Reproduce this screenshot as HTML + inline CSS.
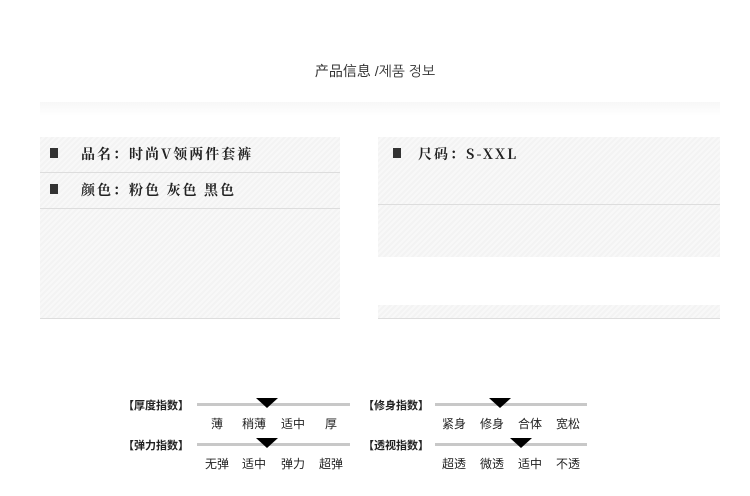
<!DOCTYPE html>
<html><head><meta charset="utf-8"><style>
body{margin:0;width:750px;height:496px;background:#fff;position:relative;overflow:hidden;font-family:"Liberation Sans","Noto Sans CJK SC",sans-serif;}
.a{position:absolute}
.title{left:0;width:750px;top:61px;text-align:center;font-size:14px;color:#333;}
.shadow{left:40px;width:680px;top:102px;height:14px;background:linear-gradient(#f7f7f7,#fff);}
.pan{background:repeating-linear-gradient(135deg,#f3f3f3 0 2px,#f8f8f8 2px 4px);}
.ln{height:1px;background:#ddd}
.row{font-family:"Noto Serif CJK SC",serif;font-size:14px;color:#222;font-weight:bold;letter-spacing:2px}
.sq{width:8px;height:10px;background:#333}
.lab{font-size:11px;color:#222;font-weight:bold}
.bar{height:3px;background:#c8c8c8}
.tri{width:0;height:0;border-left:11px solid transparent;border-right:11px solid transparent;border-top:10px solid #000}
.t{font-size:12px;color:#222;transform:translateX(-50%)}
</style></head><body>
<div class="a title">产品信息 /<span style="font-family:'NanumGothic','Noto Sans CJK KR',sans-serif">제품 정보</span></div>
<div class="a shadow"></div>

<div class="a pan" style="left:40px;top:137px;width:300px;height:182px"></div>
<div class="a ln" style="left:40px;top:172px;width:300px"></div>
<div class="a ln" style="left:40px;top:208px;width:300px"></div>
<div class="a ln" style="left:40px;top:318px;width:300px"></div>
<div class="a sq" style="left:50px;top:148px"></div>
<div class="a row" style="left:81px;top:144px">品名：时尚V领两件套裤</div>
<div class="a sq" style="left:50px;top:184px"></div>
<div class="a row" style="left:81px;top:180px">颜色：粉色 灰色 黑色</div>

<div class="a pan" style="left:378px;top:137px;width:342px;height:120px"></div>
<div class="a ln" style="left:378px;top:204px;width:342px"></div>
<div class="a pan" style="left:378px;top:305px;width:342px;height:13px"></div>
<div class="a ln" style="left:378px;top:318px;width:342px"></div>
<div class="a sq" style="left:393px;top:148px"></div>
<div class="a row" style="left:418px;top:144px">尺码：S-XXL</div>

<div class="a lab" style="left:123px;top:397px">【厚度指数】</div>
<div class="a bar" style="left:197px;top:403px;width:153px"></div>
<div class="a tri" style="left:256px;top:398px"></div>
<div class="a t" style="left:217px;top:415px">薄</div>
<div class="a t" style="left:254px;top:415px">稍薄</div>
<div class="a t" style="left:293px;top:415px">适中</div>
<div class="a t" style="left:331px;top:415px">厚</div>

<div class="a lab" style="left:123px;top:437px">【弹力指数】</div>
<div class="a bar" style="left:197px;top:443px;width:153px"></div>
<div class="a tri" style="left:256px;top:438px"></div>
<div class="a t" style="left:217px;top:455px">无弹</div>
<div class="a t" style="left:254px;top:455px">适中</div>
<div class="a t" style="left:293px;top:455px">弹力</div>
<div class="a t" style="left:331px;top:455px">超弹</div>

<div class="a lab" style="left:363px;top:397px">【修身指数】</div>
<div class="a bar" style="left:435px;top:403px;width:152px"></div>
<div class="a tri" style="left:489px;top:398px"></div>
<div class="a t" style="left:454px;top:415px">紧身</div>
<div class="a t" style="left:492px;top:415px">修身</div>
<div class="a t" style="left:530px;top:415px">合体</div>
<div class="a t" style="left:568px;top:415px">宽松</div>

<div class="a lab" style="left:363px;top:437px">【透视指数】</div>
<div class="a bar" style="left:435px;top:443px;width:152px"></div>
<div class="a tri" style="left:510px;top:438px"></div>
<div class="a t" style="left:454px;top:455px">超透</div>
<div class="a t" style="left:492px;top:455px">微透</div>
<div class="a t" style="left:530px;top:455px">适中</div>
<div class="a t" style="left:568px;top:455px">不透</div>
</body></html>
